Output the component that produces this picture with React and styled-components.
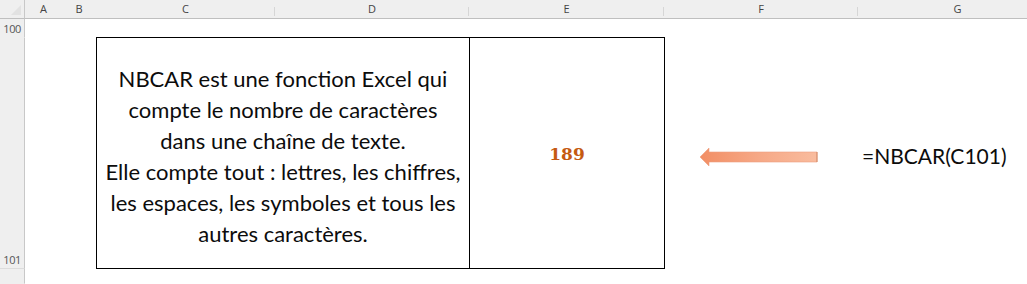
import React from 'react';
import styled, { createGlobalStyle } from 'styled-components';

const GlobalStyle = createGlobalStyle`
    html, body {
        margin: 0;
        padding: 0;
        background: #ffffff;
        overflow: hidden;
    }
`;

const COLS = [
    { key: 'A', width: 37 },
    { key: 'B', width: 34 },
    { key: 'C', width: 179 },
    { key: 'D', width: 194 },
    { key: 'E', width: 195 },
    { key: 'F', width: 194 },
    { key: 'G', width: 199 },
];

const Sheet = styled.div`
    display: grid;
    grid-template-columns: 25px ${COLS.map(c => `${c.width}px`).join(' ')};
    grid-template-rows: 19px 19px 231px 1fr;
    width: 1027px;
    height: 284px;
    overflow: hidden;
    font-family: "Open Sans", "Noto Sans", sans-serif;
`;

const Corner = styled.div`
    background: #efefef;
    border-bottom: 1px solid #bfbfbf;
    border-right: 1px solid #c8c8c8;
    box-sizing: border-box;
    position: relative;

    &::after {
        content: "";
        position: absolute;
        right: 3px;
        bottom: 3px;
        border-left: 10px solid transparent;
        border-bottom: 10px solid #e2e2e2;
    }
`;

const ColHead = styled.div`
    background: #efefef;
    border-bottom: 1px solid #bfbfbf;
    box-sizing: border-box;
    display: flex;
    align-items: center;
    justify-content: center;
    font-size: 11px;
    color: #444444;
    padding-bottom: 1px;
    position: relative;

    &::after {
        content: "";
        position: absolute;
        right: 0;
        top: 7px;
        height: 9px;
        border-right: 1px solid ${p => (p.$sep ? '#d6d6d6' : 'transparent')};
    }
`;

const RowHead = styled.div`
    grid-column: 1;
    background: #efefef;
    border-right: 1px solid #c8c8c8;
    box-sizing: border-box;
    display: flex;
    align-items: flex-end;
    justify-content: flex-end;
    padding: 0 3px 1px 0;
    font-size: 11px;
    letter-spacing: -0.4px;
    color: #555555;
    border-bottom: 1px solid ${p => (p.$line ? '#dcdcdc' : 'transparent')};
`;

const Blank = styled.div`
    grid-column: 2 / -1;
    background: #ffffff;
`;

const Table = styled.div`
    grid-column: 4 / 7;
    grid-row: 3;
    display: flex;
    border: 1px solid #000000;
    box-sizing: border-box;
    width: 569px;
    margin-top: -1px;
    height: 232px;
`;

const MergedCell = styled.div`
    width: 373px;
    border-right: 1px solid #000000;
    display: flex;
    align-items: center;
    justify-content: center;
    text-align: center;
    font-family: "Lato", "Open Sans", sans-serif;
    font-size: 22px;
    line-height: 31px;
    color: #0c0c0c;
    padding-top: 5px;
    box-sizing: border-box;
`;

const ValueCell = styled.div`
    flex: 1;
    display: flex;
    align-items: center;
    justify-content: center;
    font-family: "DejaVu Serif", "Liberation Serif", serif;
    font-weight: bold;
    font-size: 17px;
    color: #c55a11;
    padding-top: 2px;
`;

const ArrowCell = styled.div`
    grid-column: 7;
    grid-row: 3;
    display: flex;
    align-items: center;
    padding: 7px 0 0 36px;
`;

const FormulaCell = styled.div`
    grid-column: 8;
    grid-row: 3;
    display: flex;
    align-items: center;
    padding: 3px 0 0 4px;
    font-family: "Lato", "Open Sans", sans-serif;
    font-size: 21px;
    color: #0c0c0c;
    white-space: nowrap;
`;

const Arrow = () => (
    <svg width="120" height="20" viewBox="0 0 120 20">
        <defs>
            <linearGradient id="arrowFill" x1="0" y1="0" x2="1" y2="0">
                <stop offset="0" stopColor="#f28e64" />
                <stop offset="0.5" stopColor="#f6a886" />
                <stop offset="1" stopColor="#f9bc9e" />
            </linearGradient>
        </defs>
        <path
            d="M0 10 L9 1 L9 5 L117 5 L117 15 L9 15 L9 19 Z"
            fill="url(#arrowFill)"
            stroke="#eca080"
            strokeWidth="0.6"
        />
        <line x1="117" y1="5" x2="117" y2="15" stroke="#d08865" strokeWidth="1" />
    </svg>
);

const App = () => {
    return (
        <>
            <GlobalStyle />
            <Sheet>
                <Corner />
                {COLS.map((c, i) => (
                    <ColHead key={c.key} $sep={i >= 2}>{c.key}</ColHead>
                ))}

                <RowHead>100</RowHead>
                <Blank />

                <RowHead $line>101</RowHead>
                <Table>
                    <MergedCell>
                        <div>
                            NBCAR est une fonction Excel qui<br />
                            compte le nombre de caractères<br />
                            dans une chaîne de texte.<br />
                            Elle compte tout : lettres, les chiffres,<br />
                            les espaces, les symboles et tous les<br />
                            autres caractères.
                        </div>
                    </MergedCell>
                    <ValueCell>189</ValueCell>
                </Table>
                <ArrowCell>
                    <Arrow />
                </ArrowCell>
                <FormulaCell>=NBCAR(C101)</FormulaCell>

                <RowHead />
            </Sheet>
        </>
    );
};

export default App;
